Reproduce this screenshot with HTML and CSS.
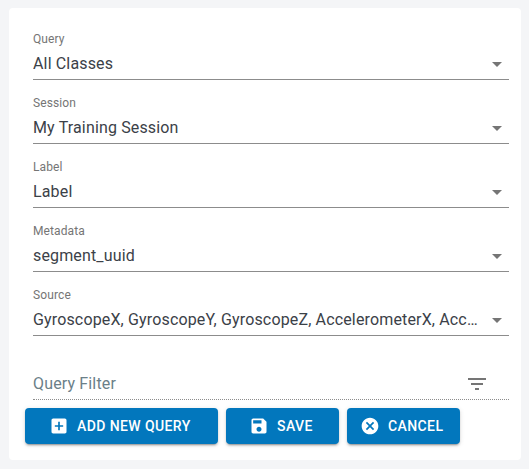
FILE: index.html
```html
<!DOCTYPE html>
<html lang="en">
<head>
<meta charset="utf-8">
<title>Query</title>
<link rel="stylesheet" href="styles.css">
</head>
<body>
<main class="card">
  <div class="field">
    <div class="label">Query</div>
    <div class="control"><span class="value">All Classes</span><svg class="arrow" viewBox="0 0 24 24"><path d="M7 10l5 5 5-5z"/></svg></div>
  </div>
  <div class="field">
    <div class="label">Session</div>
    <div class="control"><span class="value">My Training Session</span><svg class="arrow" viewBox="0 0 24 24"><path d="M7 10l5 5 5-5z"/></svg></div>
  </div>
  <div class="field">
    <div class="label">Label</div>
    <div class="control"><span class="value">Label</span><svg class="arrow" viewBox="0 0 24 24"><path d="M7 10l5 5 5-5z"/></svg></div>
  </div>
  <div class="field">
    <div class="label">Metadata</div>
    <div class="control"><span class="value">segment_uuid</span><svg class="arrow" viewBox="0 0 24 24"><path d="M7 10l5 5 5-5z"/></svg></div>
  </div>
  <div class="field">
    <div class="label">Source</div>
    <div class="control"><span class="value">GyroscopeX, GyroscopeY, GyroscopeZ, AccelerometerX, AccelerometerY, AccelerometerZ</span><svg class="arrow" viewBox="0 0 24 24"><path d="M7 10l5 5 5-5z"/></svg></div>
  </div>
  <div class="field filter">
    <div class="control"><span class="value">Query Filter</span><svg class="filter-icon" viewBox="0 0 24 24"><path d="M10 18h4v-2h-4v2zM3 6v2h18V6H3zm3 7h12v-2H6v2z"/></svg></div>
  </div>
  <div class="actions">
    <button class="btn add"><svg viewBox="0 0 24 24"><path d="M19 3H5c-1.11 0-2 .9-2 2v14c0 1.1.89 2 2 2h14c1.1 0 2-.9 2-2V5c0-1.1-.9-2-2-2zm-2 10h-4v4h-2v-4H7v-2h4V7h2v4h4v2z"/></svg>ADD NEW QUERY</button>
    <button class="btn save"><svg viewBox="0 0 24 24"><path d="M17 3H5c-1.11 0-2 .9-2 2v14c0 1.1.89 2 2 2h14c1.1 0 2-.9 2-2V7l-4-4zm-5 16c-1.66 0-3-1.34-3-3s1.34-3 3-3 3 1.34 3 3-1.34 3-3 3zm3-10H5V5h10v4z"/></svg>SAVE</button>
    <button class="btn cancel"><svg viewBox="0 0 24 24"><path d="M12 2C6.47 2 2 6.47 2 12s4.47 10 10 10 10-4.47 10-10S17.53 2 12 2zm5 13.59L15.59 17 12 13.41 8.41 17 7 15.59 10.59 12 7 8.41 8.41 7 12 10.59 15.59 7 17 8.41 13.41 12 17 15.59z"/></svg>CANCEL</button>
  </div>
</main>
</body>
</html>
```
FILE: styles.css
```css
* { box-sizing: border-box; }
body {
  margin: 0;
  padding: 8px 8px 9px 9px;
  height: 469px;
  overflow: hidden;
  background: #f4f5f7;
  font-family: Roboto, sans-serif;
}
.card {
  width: 512px;
  height: 452px;
  padding: 24px 12px 0 24px;
  border-radius: 4px;
  background: #fff;
}
.field {
  width: 476px;
  height: 48px;
  margin-bottom: 16px;
  border-bottom: 1px solid #8c8c8c;
}
.label {
  height: 16px;
  font-size: 12px;
  line-height: 14px;
  letter-spacing: 0.00938em;
  color: #757575;
}
.control {
  display: flex;
  align-items: center;
  height: 31px;
}
.value {
  flex: 1;
  min-width: 0;
  overflow: hidden;
  text-overflow: ellipsis;
  white-space: nowrap;
  font-size: 16px;
  line-height: 24px;
  letter-spacing: 0.00938em;
  color: #3b4148;
}
.arrow {
  width: 24px;
  height: 24px;
  margin-left: 7px;
  fill: #757575;
}
.filter {
  padding-top: 16px;
  margin-bottom: 8px;
  border-bottom-style: dotted;
}
.filter .value { color: #6b7f89; }
.filter-icon {
  width: 24px;
  height: 24px;
  margin-right: 20px;
  fill: #757575;
}
.actions {
  display: flex;
  gap: 8px;
  margin-left: -8px;
}
.btn {
  display: flex;
  align-items: center;
  height: 36px;
  padding: 0;
  border: 0;
  border-radius: 4px;
  background: #0277bd;
  color: #fff;
  font: 500 14px/24px Roboto, sans-serif;
  letter-spacing: 0.02857em;
  white-space: nowrap;
  box-shadow: 0 3px 1px -2px rgba(0,0,0,.2), 0 2px 2px 0 rgba(0,0,0,.14), 0 1px 5px 0 rgba(0,0,0,.12);
}
.btn svg {
  width: 20px;
  height: 20px;
  margin-right: 8px;
  fill: currentColor;
}
.add { width: 193px; padding-left: 24px; }
.save { width: 113px; padding-left: 23px; }
.cancel { width: 113px; padding-left: 13px; }
```
